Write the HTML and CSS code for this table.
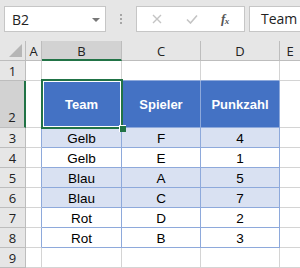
FILE: index.html
```html
<!DOCTYPE html>
<html lang="de">
<head>
<meta charset="utf-8">
<title>Tabelle</title>
<link rel="stylesheet" href="styles.css">
</head>
<body>
<div class="app">
  <div class="formula-bar">
    <div class="name-box">
      <span class="name-text">B2</span>
      <span class="caret"></span>
    </div>
    <div class="grip"><i></i><i></i><i></i></div>
    <div class="fx-box">
      <svg class="ico-x" width="10" height="10" viewBox="0 0 10 10"><path d="M1 1L9 9M9 1L1 9" stroke="#c4c4c4" stroke-width="1.4" fill="none"/></svg>
      <svg class="ico-ok" width="12" height="10" viewBox="0 0 12 10"><path d="M1 5.5L4.5 9L11 1.5" stroke="#c4c4c4" stroke-width="1.6" fill="none"/></svg>
      <span class="ico-fx">f<sub>x</sub></span>
    </div>
    <div class="input-box">Team</div>
  </div>

  <div class="sheet">
    <!-- column headers -->
    <div class="hd corner"><span class="tri"></span></div>
    <div class="hd col">A</div>
    <div class="hd col sel-col">B</div>
    <div class="hd col">C</div>
    <div class="hd col">D</div>
    <div class="hd col last">E</div>

    <!-- row 1 -->
    <div class="hd rn">1</div>
    <div class="c"></div>
    <div class="c tb-top"></div>
    <div class="c tb-top"></div>
    <div class="c tb-top"></div>
    <div class="c last"></div>

    <!-- row 2: table header -->
    <div class="hd rn sel-row tall">2</div>
    <div class="c tb-left"></div>
    <div class="c th active">Team
      <span class="sel-frame"></span>
      <span class="handle"></span>
    </div>
    <div class="c th">Spieler</div>
    <div class="c th">Punkzahl</div>
    <div class="c last"></div>

    <div class="hd rn">3</div>
    <div class="c tb-left"></div>
    <div class="c td band">Gelb</div>
    <div class="c td band">F</div>
    <div class="c td band">4</div>
    <div class="c last"></div>

    <div class="hd rn">4</div>
    <div class="c tb-left"></div>
    <div class="c td">Gelb</div>
    <div class="c td">E</div>
    <div class="c td">1</div>
    <div class="c last"></div>

    <div class="hd rn">5</div>
    <div class="c tb-left"></div>
    <div class="c td band">Blau</div>
    <div class="c td band">A</div>
    <div class="c td band">5</div>
    <div class="c last"></div>

    <div class="hd rn">6</div>
    <div class="c tb-left"></div>
    <div class="c td band">Blau</div>
    <div class="c td band">C</div>
    <div class="c td band">7</div>
    <div class="c last"></div>

    <div class="hd rn">7</div>
    <div class="c tb-left"></div>
    <div class="c td">Rot</div>
    <div class="c td">D</div>
    <div class="c td">2</div>
    <div class="c last"></div>

    <div class="hd rn">8</div>
    <div class="c tb-left"></div>
    <div class="c td">Rot</div>
    <div class="c td">B</div>
    <div class="c td">3</div>
    <div class="c last"></div>

    <div class="hd rn">9</div>
    <div class="c"></div>
    <div class="c"></div>
    <div class="c"></div>
    <div class="c"></div>
    <div class="c last"></div>
  </div>
</div>
</body>
</html>
```

FILE: styles.css
```css
* { box-sizing: border-box; }

html, body {
  margin: 0;
  padding: 0;
  background: #ffffff;
}

.app {
  width: 300px;
  height: 268px;
  overflow: hidden;
  font-family: "Liberation Sans", Arial, sans-serif;
  color: #000;
}

/* ---- formula bar ---- */
.formula-bar {
  height: 41px;
  background: #e6e6e6;
  display: flex;
  align-items: flex-start;
  padding: 6px 0 0 4px;
}

.name-box {
  width: 102px;
  height: 26px;
  background: #fff;
  border: 1px solid #c6c6c6;
  display: flex;
  align-items: center;
  justify-content: space-between;
  padding: 0 5px 0 7px;
}

.name-text {
  font-family: "Open Sans", "Noto Sans", sans-serif;
  font-size: 14px;
  color: #222;
}

.caret {
  width: 0;
  height: 0;
  border-left: 4px solid transparent;
  border-right: 4px solid transparent;
  border-top: 4px solid #777;
  margin-top: 1px;
}

.grip {
  width: 30px;
  height: 26px;
  display: flex;
  flex-direction: column;
  align-items: center;
  justify-content: center;
  gap: 2px;
}

.grip i {
  width: 2px;
  height: 2px;
  background: #a6a6a6;
}

.fx-box {
  width: 109px;
  height: 26px;
  background: #fff;
  border: 1px solid #c6c6c6;
  display: flex;
  align-items: center;
  padding-left: 15px;
}

.ico-x { margin-right: 24px; }
.ico-ok { margin-right: 23px; }

.ico-fx {
  font-family: "Liberation Serif", "DejaVu Serif", serif;
  font-style: italic;
  font-weight: bold;
  font-size: 13px;
  color: #555;
  letter-spacing: -0.5px;
}

.ico-fx sub {
  font-size: 9px;
  vertical-align: 0;
  position: relative;
  top: 1px;
}

.input-box {
  flex: 1;
  height: 26px;
  margin-left: 4px;
  background: #fff;
  border: 1px solid #c6c6c6;
  border-right: none;
  padding-left: 11px;
  font-family: "Open Sans", "Noto Sans", sans-serif;
  font-size: 14px;
  line-height: 24px;
  color: #222;
}

/* ---- sheet grid ---- */
.sheet {
  display: grid;
  grid-template-columns: 26px 16px 80px 79px 79px 1fr;
  grid-template-rows: 20px 20px 47px repeat(7, 20px);
}

.hd {
  background: #e6e6e6;
  border-right: 1px solid #bdbdbd;
  border-bottom: 1px solid #bdbdbd;
  font-family: "Open Sans", "Noto Sans", sans-serif;
  font-size: 13px;
  color: #222;
  display: flex;
  align-items: center;
  justify-content: center;
}

.hd.col { padding-top: 1px; }
.hd.col.last { border-right: none; }

.corner {
  position: relative;
}

.tri {
  position: absolute;
  right: 3px;
  bottom: 3px;
  width: 0;
  height: 0;
  border-left: 13px solid transparent;
  border-bottom: 13px solid #b6b6b6;
}

.sel-col {
  background: #d2d2d2;
  border-bottom: 2px solid #217346;
}

.rn {
  background: #e6e6e6;
  font-size: 13px;
}

.rn.tall {
  align-items: flex-end;
  padding-bottom: 1px;
}

.sel-row {
  background: #d2d2d2;
  border-right: 2px solid #217346;
}

.c {
  border-right: 1px solid #d4d4d4;
  border-bottom: 1px solid #d4d4d4;
  background: #fff;
}

.c.last { border-right: none; }

.tb-top { border-bottom-color: #8ea9db; }
.tb-left { border-right-color: #8ea9db; }

.th {
  background: #4472c4;
  border-right-color: #8ea9db;
  border-bottom-color: #8ea9db;
  color: #fff;
  font-weight: bold;
  font-size: 13px;
  display: flex;
  align-items: center;
  justify-content: center;
}

.td {
  border-right-color: #8ea9db;
  border-bottom-color: #8ea9db;
  font-size: 13.5px;
  display: flex;
  align-items: center;
  justify-content: center;
  padding-top: 1px;
}

.td.band { background: #d9e1f2; }

/* active cell outline and fill handle */
.active { position: relative; }

.sel-frame {
  position: absolute;
  left: -1px;
  top: -2px;
  right: -2px;
  bottom: -2px;
  border: 2px solid #217346;
  box-shadow: inset 0 0 0 1px #fff;
}

.handle {
  position: absolute;
  right: -5px;
  bottom: -5px;
  width: 7px;
  height: 7px;
  background: #217346;
  border: 1px solid #fff;
  border-right: none;
  border-bottom: none;
}
```
